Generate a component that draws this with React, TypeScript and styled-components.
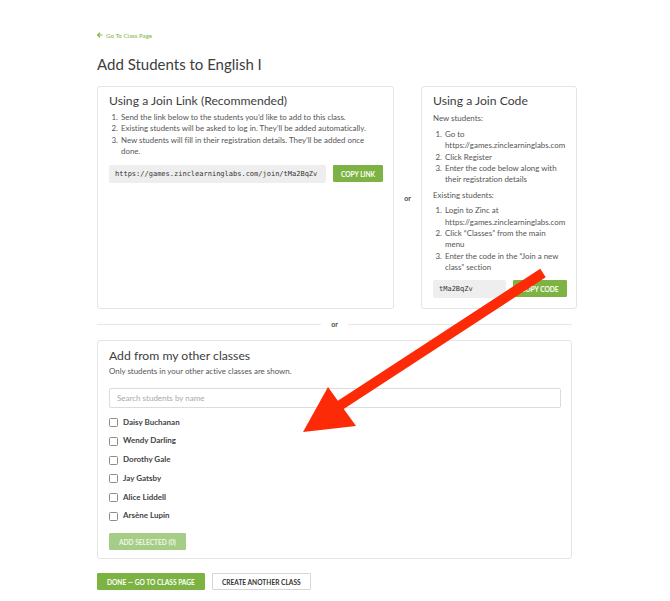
import styled, { createGlobalStyle } from "styled-components";

const GlobalStyle = createGlobalStyle`
  body {
    margin: 0;
    background: #fff;
    font-family: "Lato", "Noto Sans", sans-serif;
    font-variant-ligatures: none;
    color: #4a4a4a;
  }
`;

const green = "#7cb342";

const Page = styled.div`
  position: relative;
  width: 670px;
  height: 601px;
  padding: 31px 0 0 97px;
  box-sizing: border-box;
`;

const BackLink = styled.a`
  display: flex;
  align-items: center;
  gap: 3px;
  font-size: 6.2px;
  color: ${green};
  text-decoration: none;
  height: 8px;
`;

const Title = styled.h1`
  margin: 15px 0 0;
  font-size: 15px;
  font-weight: 400;
  color: #3d3d3d;
  line-height: 20px;
`;

const TopRow = styled.div`
  display: grid;
  grid-template-columns: 297px 27px 156px;
  margin-top: 12px;
`;

const Card = styled.div`
  border: 1px solid #e4e4e4;
  border-radius: 3px;
  padding: 7px 11px 8px;
  box-sizing: border-box;
`;

const CodeCard = styled(Card)`
  padding-bottom: 10px;
`;

const CardTitle = styled.h2`
  margin: 0;
  font-size: 12.2px;
  font-weight: 400;
  color: #3d3d3d;
  line-height: 14px;
`;

const Steps = styled.ol<{ $top?: number }>`
  margin: ${(p) => p.$top ?? 0}px 0 0;
  padding-left: 11px;
  font-size: 7.9px;
  line-height: 11.3px;
  color: #555;

  li {
    padding-left: 1px;
  }
`;

const Note = styled.p<{ $top: number; $bottom: number }>`
  margin: ${(p) => p.$top}px 0 ${(p) => p.$bottom}px;
  font-size: 7.9px;
  line-height: 11px;
  color: #555;
`;

const CopyRow = styled.div<{ $top: number }>`
  display: flex;
  gap: 7px;
  margin-top: ${(p) => p.$top}px;
`;

const CodeBox = styled.div<{ $width: number }>`
  width: ${(p) => p.$width}px;
  height: 18px;
  flex-shrink: 0;
  background: #eeeeee;
  border-radius: 2px;
  display: flex;
  align-items: center;
  padding-left: 6px;
  box-sizing: border-box;
  font-family: "DejaVu Sans Mono", monospace;
  font-size: 7px;
  color: #333;
  white-space: nowrap;
  overflow: hidden;
`;

const Button = styled.button<{ $variant?: "solid" | "faded" | "outline"; $tight?: boolean }>`
  height: 17px;
  padding: 0 ${(p) => (p.$tight ? 7 : 9)}px;
  border-radius: 1px;
  font-family: "Lato", sans-serif;
  font-size: 6.6px;
  font-weight: 700;
  white-space: nowrap;
  cursor: pointer;
  border: 1px solid
    ${(p) =>
      p.$variant === "outline"
        ? "#d6d6d6"
        : p.$variant === "faded"
        ? "#a6cd86"
        : green};
  background: ${(p) =>
    p.$variant === "outline" ? "#fff" : p.$variant === "faded" ? "#a6cd86" : green};
  color: ${(p) =>
    p.$variant === "outline" ? "#333" : p.$variant === "faded" ? "#eef6e6" : "#fff"};
`;

const OrColumn = styled.div`
  display: flex;
  align-items: center;
  justify-content: center;
  font-size: 7px;
  font-weight: 700;
  color: #444;
`;

const Divider = styled.div`
  display: flex;
  align-items: center;
  gap: 10px;
  width: 475px;
  height: 10px;
  margin: 10px 0 11px;
  font-size: 7px;
  font-weight: 700;
  color: #444;

  &::before,
  &::after {
    content: "";
    flex: 1;
    height: 1px;
    background: #e6e6e6;
  }
`;

const WideCard = styled(Card)`
  width: 475px;
  padding-top: 8px;
  padding-bottom: 8px;
`;

const Hint = styled.p`
  margin: 3px 0 12px;
  font-size: 7.9px;
  line-height: 10px;
  color: #555;
`;

const Search = styled.input`
  display: block;
  width: 452px;
  height: 20px;
  box-sizing: border-box;
  border: 1px solid #dcdcdc;
  border-radius: 2px;
  padding: 0 7px;
  font-family: "Lato", sans-serif;
  font-size: 8px;
  outline: none;

  &::placeholder {
    color: #a8a8a8;
  }
`;

const StudentList = styled.div`
  display: flex;
  flex-direction: column;
  gap: 7.7px;
  margin: 8px 0 8px;
`;

const StudentRow = styled.label`
  display: flex;
  align-items: center;
  gap: 5px;
  height: 11px;
  font-size: 8px;
  font-weight: 700;
  color: #444;
`;

const Box = styled.span`
  width: 7px;
  height: 7px;
  border: 1px solid #8a8a8a;
  border-radius: 1.5px;
  margin-top: 2px;
`;

const Footer = styled.div`
  display: flex;
  gap: 7px;
  margin-top: 14px;
`;

const Arrow = styled.svg`
  position: absolute;
  left: 0;
  top: 0;
  pointer-events: none;
`;

const students = [
  "Daisy Buchanan",
  "Wendy Darling",
  "Dorothy Gale",
  "Jay Gatsby",
  "Alice Liddell",
  "Arsène Lupin",
];

const App = () => {
  return (
    <Page>
      <GlobalStyle />
      <BackLink href="#">
        <svg width="6" height="6" viewBox="0 0 10 10">
          <path d="M5 1 L1 5 L5 9 M1 5 H9" stroke={green} strokeWidth="2" fill="none" />
        </svg>
        Go To Class Page
      </BackLink>
      <Title>Add Students to English I</Title>

      <TopRow>
        <Card>
          <CardTitle>Using a Join Link (Recommended)</CardTitle>
          <Steps $top={4}>
            <li>Send the link below to the students you’d like to add to this class.</li>
            <li>Existing students will be asked to log in. They’ll be added automatically.</li>
            <li>New students will fill in their registration details. They’ll be added once done.</li>
          </Steps>
          <CopyRow $top={8}>
            <CodeBox $width={217}>https://games.zinclearninglabs.com/join/tMa2BqZv</CodeBox>
            <Button $tight>COPY LINK</Button>
          </CopyRow>
        </Card>

        <OrColumn>or</OrColumn>

        <CodeCard>
          <CardTitle>Using a Join Code</CardTitle>
          <Note $top={5} $bottom={5}>New students:</Note>
          <Steps>
            <li>Go to https://games.zinclearninglabs.com</li>
            <li>Click Register</li>
            <li>Enter the code below along with their registration details</li>
          </Steps>
          <Note $top={5} $bottom={4}>Existing students:</Note>
          <Steps>
            <li>Login to Zinc at https://games.zinclearninglabs.com</li>
            <li>Click “Classes” from the main menu</li>
            <li>Enter the code in the “Join a new class” section</li>
          </Steps>
          <CopyRow $top={7}>
            <CodeBox $width={73}>tMa2BqZv</CodeBox>
            <Button $tight>COPY CODE</Button>
          </CopyRow>
        </CodeCard>
      </TopRow>

      <Divider>or</Divider>

      <WideCard>
        <CardTitle>Add from my other classes</CardTitle>
        <Hint>Only students in your other active classes are shown.</Hint>
        <Search placeholder="Search students by name" />
        <StudentList>
          {students.map((name) => (
            <StudentRow key={name}>
              <Box />
              {name}
            </StudentRow>
          ))}
        </StudentList>
        <Button $variant="faded">ADD SELECTED (0)</Button>
      </WideCard>

      <Footer>
        <Button>DONE — GO TO CLASS PAGE</Button>
        <Button $variant="outline">CREATE ANOTHER CLASS</Button>
      </Footer>

      {/* red pointer drawn over the page */}
      <Arrow width="670" height="601" viewBox="0 0 670 601">
        <line x1="543" y1="273" x2="336" y2="408" stroke="#fc2a06" strokeWidth="10" />
        <polygon points="303,432 328,387 356,426" fill="#fc2a06" />
      </Arrow>
    </Page>
  );
};

export default App;
